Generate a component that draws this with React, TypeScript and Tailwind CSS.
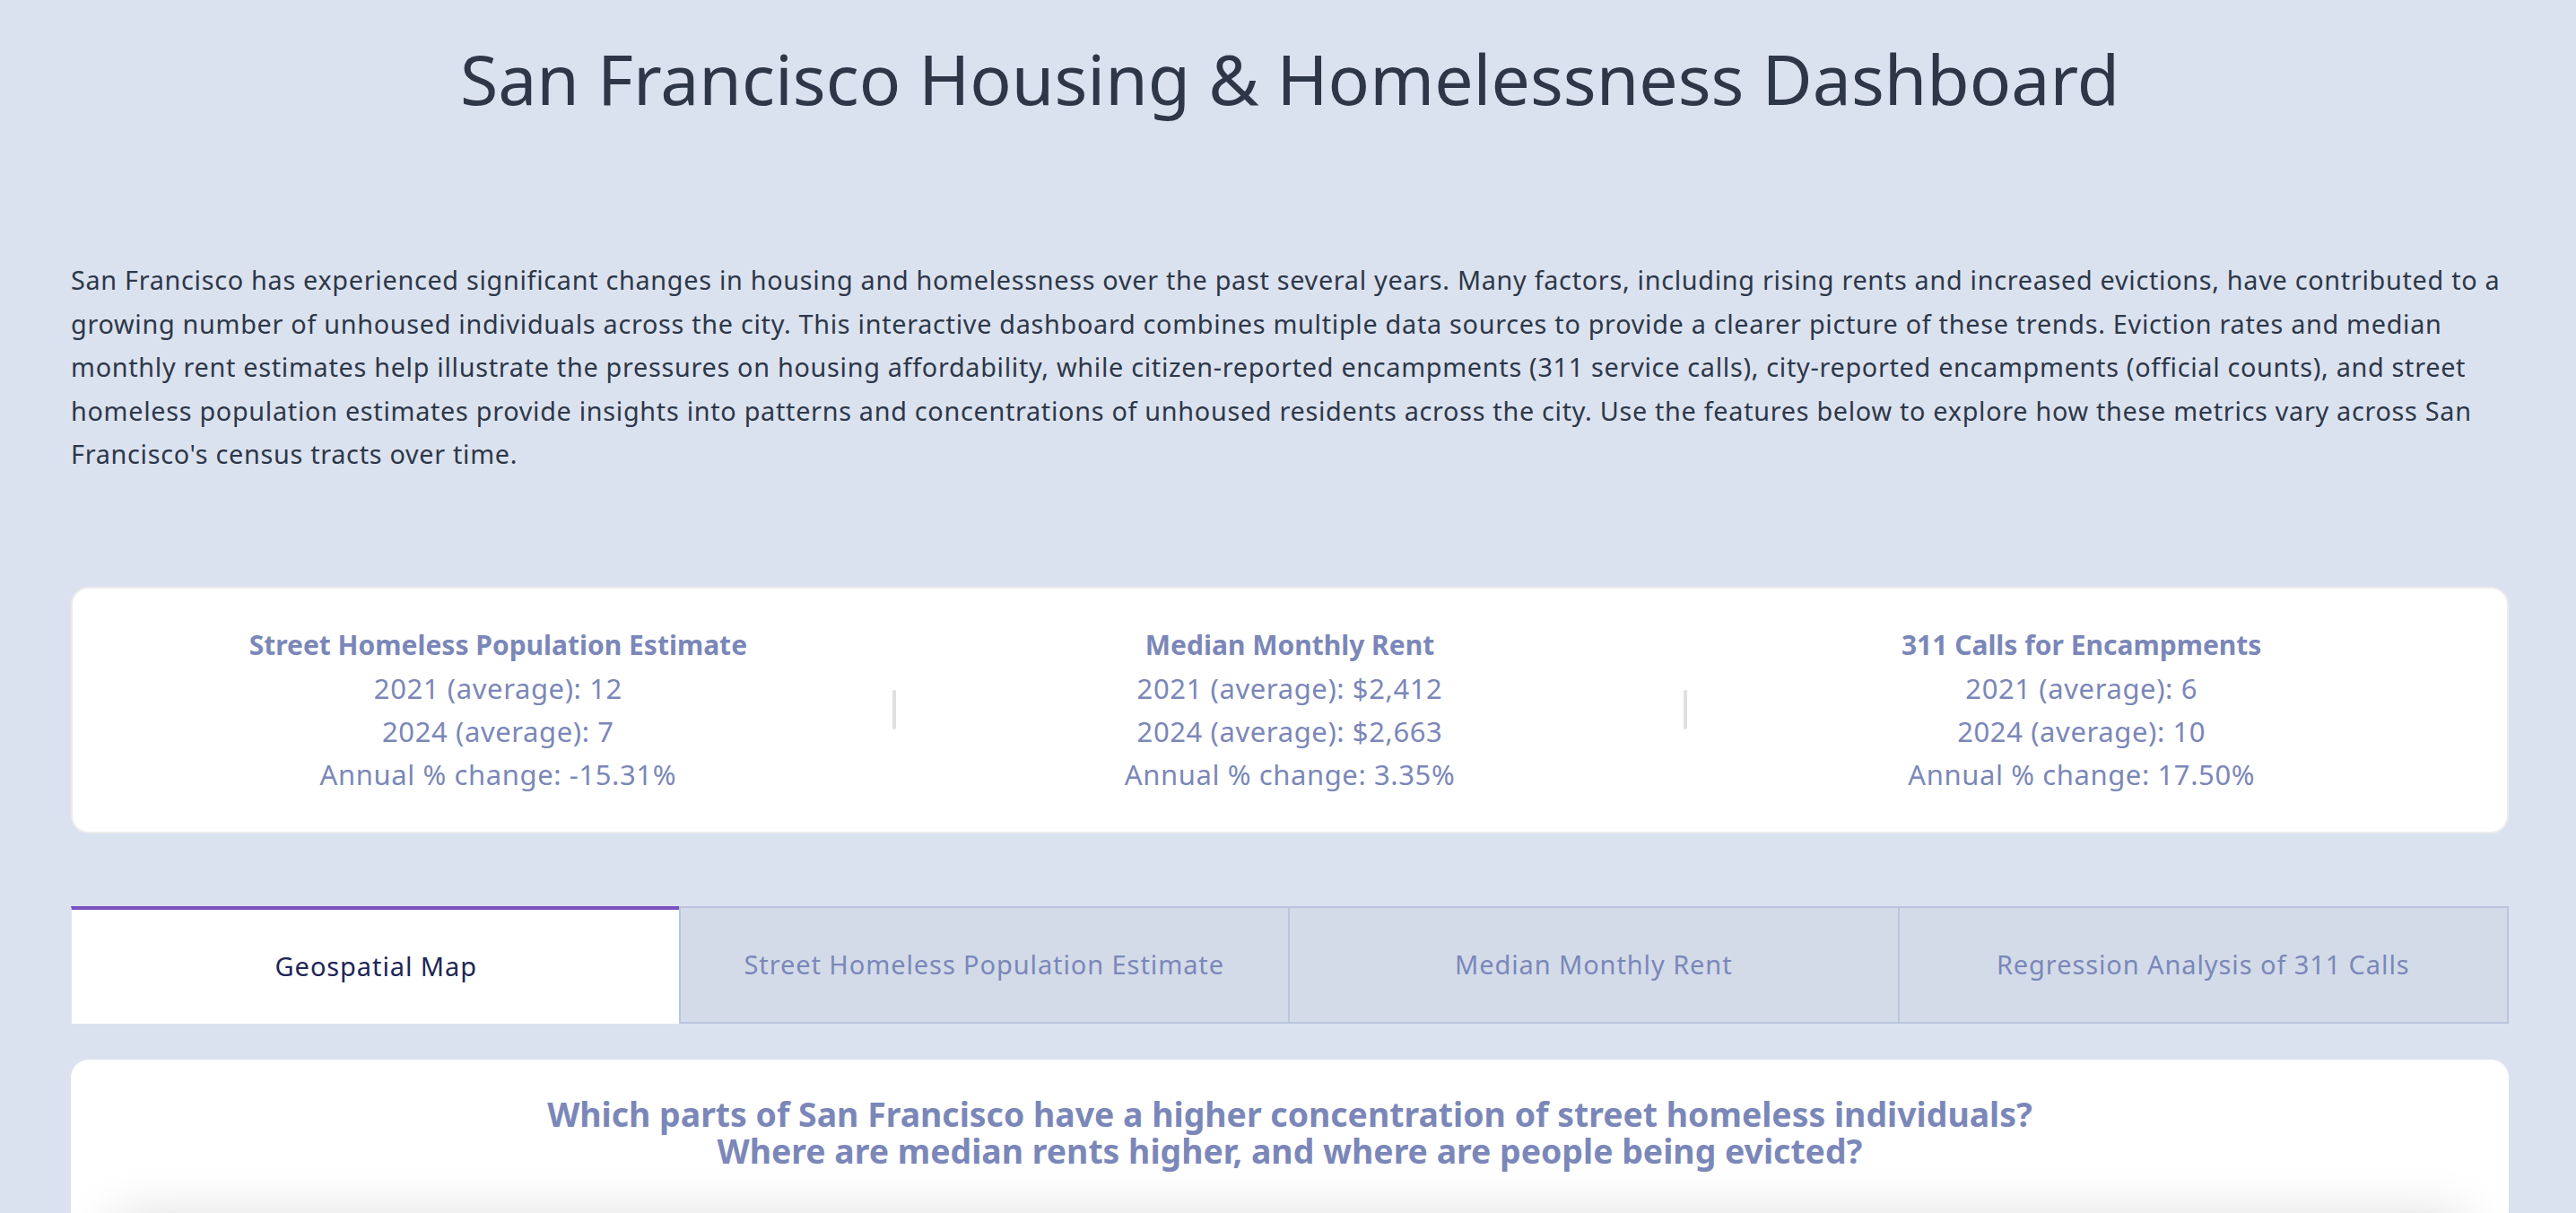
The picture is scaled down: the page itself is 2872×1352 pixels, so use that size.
import React from "react";

const stats = [
  {
    title: "Street Homeless Population Estimate",
    rows: ["2021 (average): 12", "2024 (average): 7", "Annual % change: -15.31%"],
  },
  {
    title: "Median Monthly Rent",
    rows: ["2021 (average): $2,412", "2024 (average): $2,663", "Annual % change: 3.35%"],
  },
  {
    title: "311 Calls for Encampments",
    rows: ["2021 (average): 6", "2024 (average): 10", "Annual % change: 17.50%"],
  },
];

const tabs = [
  "Geospatial Map",
  "Street Homeless Population Estimate",
  "Median Monthly Rent",
  "Regression Analysis of 311 Calls",
];

export default function App() {
  return (
    <div
      className="min-h-screen bg-[#dbe2ef] pl-[79px] pr-[75px] overflow-hidden"
      style={{ fontFamily: "'Noto Sans', Lato, sans-serif" }}
    >
      <h1 className="pt-[38px] text-center text-[77px] leading-[100px] text-[#2d3748]">
        San Francisco Housing &amp; Homelessness Dashboard
      </h1>

      <p className="mt-[150px] text-[28.8px] leading-[48.5px] tracking-[0.7px] text-[#2d3748]">
        San Francisco has experienced significant changes in housing and homelessness over the past several years. Many factors, including rising rents and increased evictions, have contributed to a<br />
        growing number of unhoused individuals across the city. This interactive dashboard combines multiple data sources to provide a clearer picture of these trends. Eviction rates and median<br />
        monthly rent estimates help illustrate the pressures on housing affordability, while citizen-reported encampments (311 service calls), city-reported encampments (official counts), and street<br />
        homeless population estimates provide insights into patterns and concentrations of unhoused residents across the city. Use the features below to explore how these metrics vary across San<br />
        Francisco's census tracts over time.
      </p>

      <div className="mt-[123px] h-[275px] rounded-[20px] border-2 border-[#ececec] bg-white px-[35px] flex items-center">
        {stats.map((s, i) => (
          <React.Fragment key={s.title}>
            {i > 0 && <div className="w-[4px] h-[44px] rounded-full bg-[#e0e0e0] shrink-0" />}
            <div className="flex-1 text-center text-[31px] leading-[48px] text-[#7b87b8]">
              <div className="font-bold text-[30px]">{s.title}</div>
              {s.rows.map((r) => (
                <div key={r} className="tracking-[0.6px]">{r}</div>
              ))}
            </div>
          </React.Fragment>
        ))}
      </div>

      <div className="mt-[81px] grid grid-cols-4 h-[131px]">
        {tabs.map((t, i) =>
          i === 0 ? (
            <div
              key={t}
              className="flex items-center justify-center bg-white border-t-4 border-[#7b50c0] border-l border-l-[#e2e6ee] text-[29px] tracking-[0.9px] text-[#1e2656]"
            >
              {t}
            </div>
          ) : (
            <div
              key={t}
              className="flex items-center justify-center bg-[#d3dbe9] border-2 border-[#bac5dd] -ml-[2px] text-[29px] tracking-[0.9px] text-[#7b87b8]"
            >
              {t}
            </div>
          )
        )}
      </div>

      <div className="mt-[40px] rounded-t-[20px] bg-white pt-[40px] pb-[400px] px-[40px]">
        <h3 className="text-center font-bold text-[37.4px] leading-[41px] text-[#7b87b8]">
          <div>Which parts of San Francisco have a higher concentration of street homeless individuals?</div>
          <div>Where are median rents higher, and where are people being evicted?</div>
        </h3>
        <div className="mt-[60px] h-[600px] mx-[10px] bg-white shadow-[0_0_60px_rgba(0,0,0,0.18)]" />
      </div>
    </div>
  );
}
